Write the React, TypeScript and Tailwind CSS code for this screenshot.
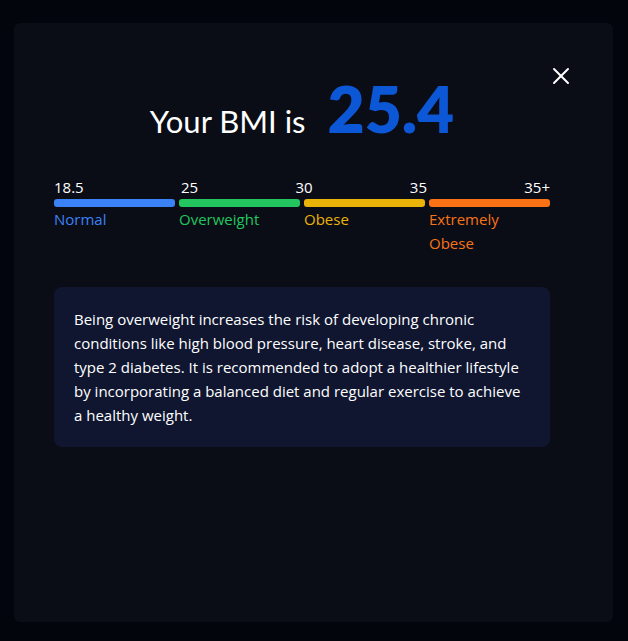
import { X } from 'lucide-react'

const ranges = [
  { label: 'Normal', bar: 'bg-[#3b82f6]', text: 'text-[#3b82f6]' },
  { label: 'Overweight', bar: 'bg-[#22c55e]', text: 'text-[#22c55e]' },
  { label: 'Obese', bar: 'bg-[#eab308]', text: 'text-[#eab308]' },
  { label: 'Extremely Obese', bar: 'bg-[#f97316]', text: 'text-[#f97316]' },
]

export default function App() {
  return (
    <div className="min-h-[641px] bg-[#03050d] pt-[23px] pl-[14px] font-['Open_Sans',sans-serif]">
      <div className="relative w-[599px] h-[599px] rounded-md bg-[#0a0d16] pl-10 pt-[54px]">
        <button className="absolute top-[39px] right-[38px] text-white">
          <X size={28} strokeWidth={1.7} />
        </button>

        <div className="w-[496px]">
          <h2 className="flex items-baseline justify-center gap-[22px] text-white leading-none font-['Lato',sans-serif]">
            <span className="text-[31px]">Your BMI is</span>
            <span className="text-[64px] font-extrabold text-[#0b57d6]">25.4</span>
          </h2>

          <div className="mt-[34px]">
            <div className="flex justify-between text-[15px] leading-6 text-white">
              <span>18.5</span>
              <span>25</span>
              <span>30</span>
              <span>35</span>
              <span>35+</span>
            </div>
            <div className="grid grid-cols-4 gap-1">
              {ranges.map((r) => (
                <div key={r.label}>
                  <div className={`h-2 rounded-[3px] ${r.bar}`} />
                  <p className={`pr-8 text-[15px] leading-6 ${r.text}`}>{r.label}</p>
                </div>
              ))}
            </div>
          </div>

          <div className="mt-8 rounded-lg bg-[#101630] p-5">
            <p className="text-[15px] font-medium leading-6 text-white">
              Being overweight increases the risk of developing chronic conditions like high blood
              pressure, heart disease, stroke, and type 2 diabetes. It is recommended to adopt a
              healthier lifestyle by incorporating a balanced diet and regular exercise to achieve
              a healthy weight.
            </p>
          </div>
        </div>
      </div>
    </div>
  )
}
